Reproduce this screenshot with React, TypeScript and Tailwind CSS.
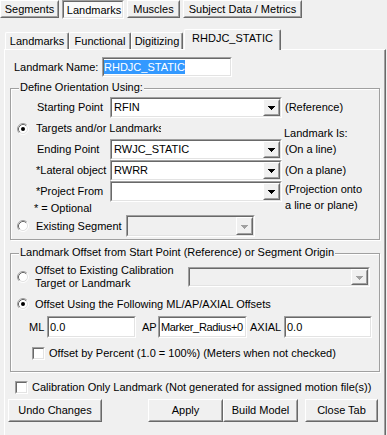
import React from 'react';

type P = { className?: string; inner?: string; children?: React.ReactNode };

function Sunken({ className = '', inner = 'bg-white', children }: P) {
  return (
    <div className={`border border-t-[#a0a0a0] border-l-[#a0a0a0] border-r-white border-b-white shrink-0 ${className}`}>
      <div className={`h-full w-full border border-t-[#696969] border-l-[#696969] border-r-[#e3e3e3] border-b-[#e3e3e3] flex items-center overflow-hidden ${inner}`}>
        {children}
      </div>
    </div>
  );
}

function Raised({ className = '', children }: P) {
  return (
    <div className={`border border-t-white border-l-white border-r-[#696969] border-b-[#696969] bg-[#f0f0f0] shrink-0 ${className}`}>
      <div className="h-full w-full border border-t-[#f0f0f0] border-l-[#f0f0f0] border-r-[#a0a0a0] border-b-[#a0a0a0] flex items-center justify-center whitespace-nowrap">
        {children}
      </div>
    </div>
  );
}

function Combo({ className = '', text = '', disabled = false }: { className?: string; text?: string; disabled?: boolean }) {
  return (
    <Sunken className={className} inner={disabled ? 'bg-[#f0f0f0]' : 'bg-white'}>
      <div className="flex-1 pl-[2px] whitespace-nowrap overflow-hidden">{text}</div>
      <Raised className="w-[17px] h-full">
        <svg width="7" height="4" viewBox="0 0 7 4" className="mt-[1px]" shapeRendering="crispEdges">
          <path d="M0 0h7v1h-1v1h-1v1h-1v1h-1v-1h-1v-1h-1v-1h-1z" fill={disabled ? '#a0a0a0' : '#000'} />
        </svg>
      </Raised>
    </Sunken>
  );
}

function Radio({ checked = false }: { checked?: boolean }) {
  return (
    <svg width="12" height="12" viewBox="0 0 12 12" className="shrink-0">
      <circle cx="6" cy="6" r="4.5" fill="#fff" />
      <path d="M2.11 9.89A5.5 5.5 0 0 1 9.89 2.11" stroke="#a0a0a0" fill="none" />
      <path d="M9.89 2.11A5.5 5.5 0 0 1 2.11 9.89" stroke="#ffffff" fill="none" />
      <path d="M2.82 9.18A4.5 4.5 0 0 1 9.18 2.82" stroke="#696969" fill="none" />
      <path d="M9.18 2.82A4.5 4.5 0 0 1 2.82 9.18" stroke="#e3e3e3" fill="none" />
      {checked && <circle cx="6" cy="6" r="2" fill="#000" />}
    </svg>
  );
}

function Check() {
  return <Sunken className="w-[13px] h-[13px]" />;
}

function Group({ title, className = '', children }: { title: string; className?: string; children?: React.ReactNode }) {
  return (
    <div className={`relative border border-[#a0a0a0] shadow-[inset_1px_1px_0_#ffffff,1px_1px_0_#ffffff] ${className}`}>
      <span className="absolute left-[8px] top-[-8px] bg-[#f0f0f0] px-[1px] leading-[13px] whitespace-nowrap">{title}</span>
      {children}
    </div>
  );
}

export default function App() {
  return (
    <div className="w-[387px] h-[435px] bg-[#f0f0f0] overflow-hidden text-[11px] leading-[13px] text-black font-['Liberation_Sans',Arial,sans-serif]">
      {/* top button tabs */}
      <div className="flex h-[19px] gap-[3px]">
        <Raised className="w-[59px] h-[18px]">Segments</Raised>
        <div className="w-[62px] h-[19px] border border-t-[#a0a0a0] border-l-[#a0a0a0] border-r-white border-b-white">
          <div className="h-full w-full border border-t-[#696969] border-l-[#696969] border-r-[#e3e3e3] border-b-[#e3e3e3] bg-[#fafafa] flex items-center justify-center pt-[1px] pl-[2px]">
            Landmarks
          </div>
        </div>
        <Raised className="w-[53px] h-[18px]">Muscles</Raised>
        <Raised className="w-[119px] h-[18px]">Subject Data / Metrics</Raised>
      </div>

      {/* inner tab control */}
      <div className="mt-[10px] ml-[4px] w-[382px]">
        <div className="flex items-end h-[20px] pl-[1px]">
          <div className="w-[64px] h-[17px] border-l border-t border-r border-l-white border-t-white border-r-[#696969] shadow-[inset_-1px_0_0_#a0a0a0] rounded-t-[2px] flex items-center justify-center">Landmarks</div>
          <div className="w-[62px] h-[17px] border-l border-t border-r border-l-white border-t-white border-r-[#696969] shadow-[inset_-1px_0_0_#a0a0a0] rounded-t-[2px] flex items-center justify-center">Functional</div>
          <div className="w-[52px] h-[17px] border-l border-t border-r border-l-white border-t-white border-r-[#696969] shadow-[inset_-1px_0_0_#a0a0a0] rounded-t-[2px] flex items-center justify-center">Digitizing</div>
          <div className="relative z-10 ml-[1px] w-[97px] h-[21px] -mb-[1px] bg-[#f0f0f0] border-l border-t border-r border-l-white border-t-white border-r-[#696969] shadow-[inset_-1px_0_0_#a0a0a0] rounded-t-[2px] flex justify-center pt-[2px]">RHDJC_STATIC</div>
        </div>
        <div className="h-[386px] border-l border-t border-r border-l-white border-t-white border-r-[#696969] shadow-[inset_-1px_0_0_#a0a0a0]">
          {/* Landmark name */}
          <div className="flex items-center mt-[7px] h-[20px] pl-[9px]">
            <span className="w-[88px] whitespace-nowrap">Landmark Name:</span>
            <Sunken className="w-[130px] h-[20px]">
              <span className="bg-[#3399ff] text-white leading-[14px] whitespace-nowrap">RHDJC_STATIC</span>
            </Sunken>
          </div>

          {/* Group 1 */}
          <Group title="Define Orientation Using:" className="ml-[5px] mt-[11px] w-[370px] h-[152px]">
            <div className="flex items-center h-[21px] mt-[8px]">
              <div className="w-[99px] pl-[26px] whitespace-nowrap">Starting Point</div>
              <Combo className="w-[172px] h-[21px]" text="RFIN" />
              <div className="ml-[3px] whitespace-nowrap">(Reference)</div>
            </div>
            <div className="flex h-[21px]">
              <div className="w-[273px] flex items-center pl-[6px]">
                <Radio checked />
                <span className="ml-[7px] w-[125px] overflow-hidden whitespace-nowrap">Targets and/or Landmarks</span>
              </div>
              <div className="self-end -mb-[1px] whitespace-nowrap">Landmark Is:</div>
            </div>
            <div className="flex items-center h-[21px]">
              <div className="w-[99px] pl-[26px] whitespace-nowrap">Ending Point</div>
              <Combo className="w-[172px] h-[21px]" text="RWJC_STATIC" />
              <div className="ml-[3px] whitespace-nowrap">(On a line)</div>
            </div>
            <div className="flex items-center h-[21px]">
              <div className="w-[99px] pl-[25px] whitespace-nowrap">*Lateral object</div>
              <Combo className="w-[172px] h-[21px]" text="RWRR" />
              <div className="ml-[3px] whitespace-nowrap">(On a plane)</div>
            </div>
            <div className="flex">
              <div className="w-[271px]">
                <div className="flex items-center h-[21px]">
                  <div className="w-[99px] pl-[25px] whitespace-nowrap">*Project From</div>
                  <Combo className="w-[172px] h-[21px]" />
                </div>
                <div className="pl-[23px] leading-[12px] whitespace-nowrap">* = Optional</div>
              </div>
              <div className="ml-[3px] pt-[2px] whitespace-nowrap">
                <div>(Projection onto</div>
                <div className="mt-[3px]">a line or plane)</div>
              </div>
            </div>
            <div className="flex items-center h-[22px] mt-[1px]">
              <div className="w-[115px] flex items-center pl-[6px]">
                <Radio />
                <span className="ml-[7px] whitespace-nowrap">Existing Segment</span>
              </div>
              <Combo className="w-[129px] h-[22px]" disabled />
            </div>
          </Group>

          {/* Group 2 */}
          <Group title="Landmark Offset from Start Point (Reference) or Segment Origin" className="ml-[5px] mt-[13px] w-[370px] h-[119px]">
            <div className="flex items-center mt-[10px] h-[26px]">
              <div className="w-[177px] flex items-center pl-[6px]">
                <Radio />
                <div className="ml-[6px] whitespace-nowrap">
                  <div>Offset to Existing Calibration</div>
                  <div>Target or Landmark</div>
                </div>
              </div>
              <Combo className="w-[182px] h-[20px]" disabled />
            </div>
            <div className="flex items-center mt-[7px] h-[14px] pl-[6px]">
              <Radio checked />
              <span className="ml-[6px] whitespace-nowrap">Offset Using the Following ML/AP/AXIAL Offsets</span>
            </div>
            <div className="flex items-center mt-[5px] h-[22px] pl-[18px]">
              <span className="w-[18px]">ML</span>
              <Sunken className="w-[89px] h-[22px]"><span className="pl-[1px] whitespace-nowrap">0.0</span></Sunken>
              <span className="ml-[6px] w-[16px]">AP</span>
              <Sunken className="w-[89px] h-[22px]"><span className="pl-[1px] tracking-[-0.35px] whitespace-nowrap">Marker_Radius+0</span></Sunken>
              <span className="ml-[3px] w-[34px]">AXIAL</span>
              <Sunken className="w-[88px] h-[22px]"><span className="pl-[1px] whitespace-nowrap">0.0</span></Sunken>
            </div>
            <div className="flex items-center mt-[8px] h-[14px] pl-[21px]">
              <Check />
              <span className="ml-[4px] whitespace-nowrap">Offset by Percent (1.0 = 100%) (Meters when not checked)</span>
            </div>
          </Group>

          <div className="flex items-center mt-[8px] h-[14px] pl-[10px]">
            <Check />
            <span className="ml-[4px] whitespace-nowrap">Calibration Only Landmark (Not generated for assigned motion file(s))</span>
          </div>

          <div className="flex mt-[5px] h-[23px]">
            <Raised className="ml-[3px] w-[94px] h-[23px]">Undo Changes</Raised>
            <Raised className="ml-[46px] w-[75px] h-[23px]">Apply</Raised>
            <Raised className="w-[75px] h-[23px]">Build Model</Raised>
            <Raised className="ml-[7px] w-[73px] h-[23px]">Close Tab</Raised>
          </div>
        </div>
      </div>
    </div>
  );
}
